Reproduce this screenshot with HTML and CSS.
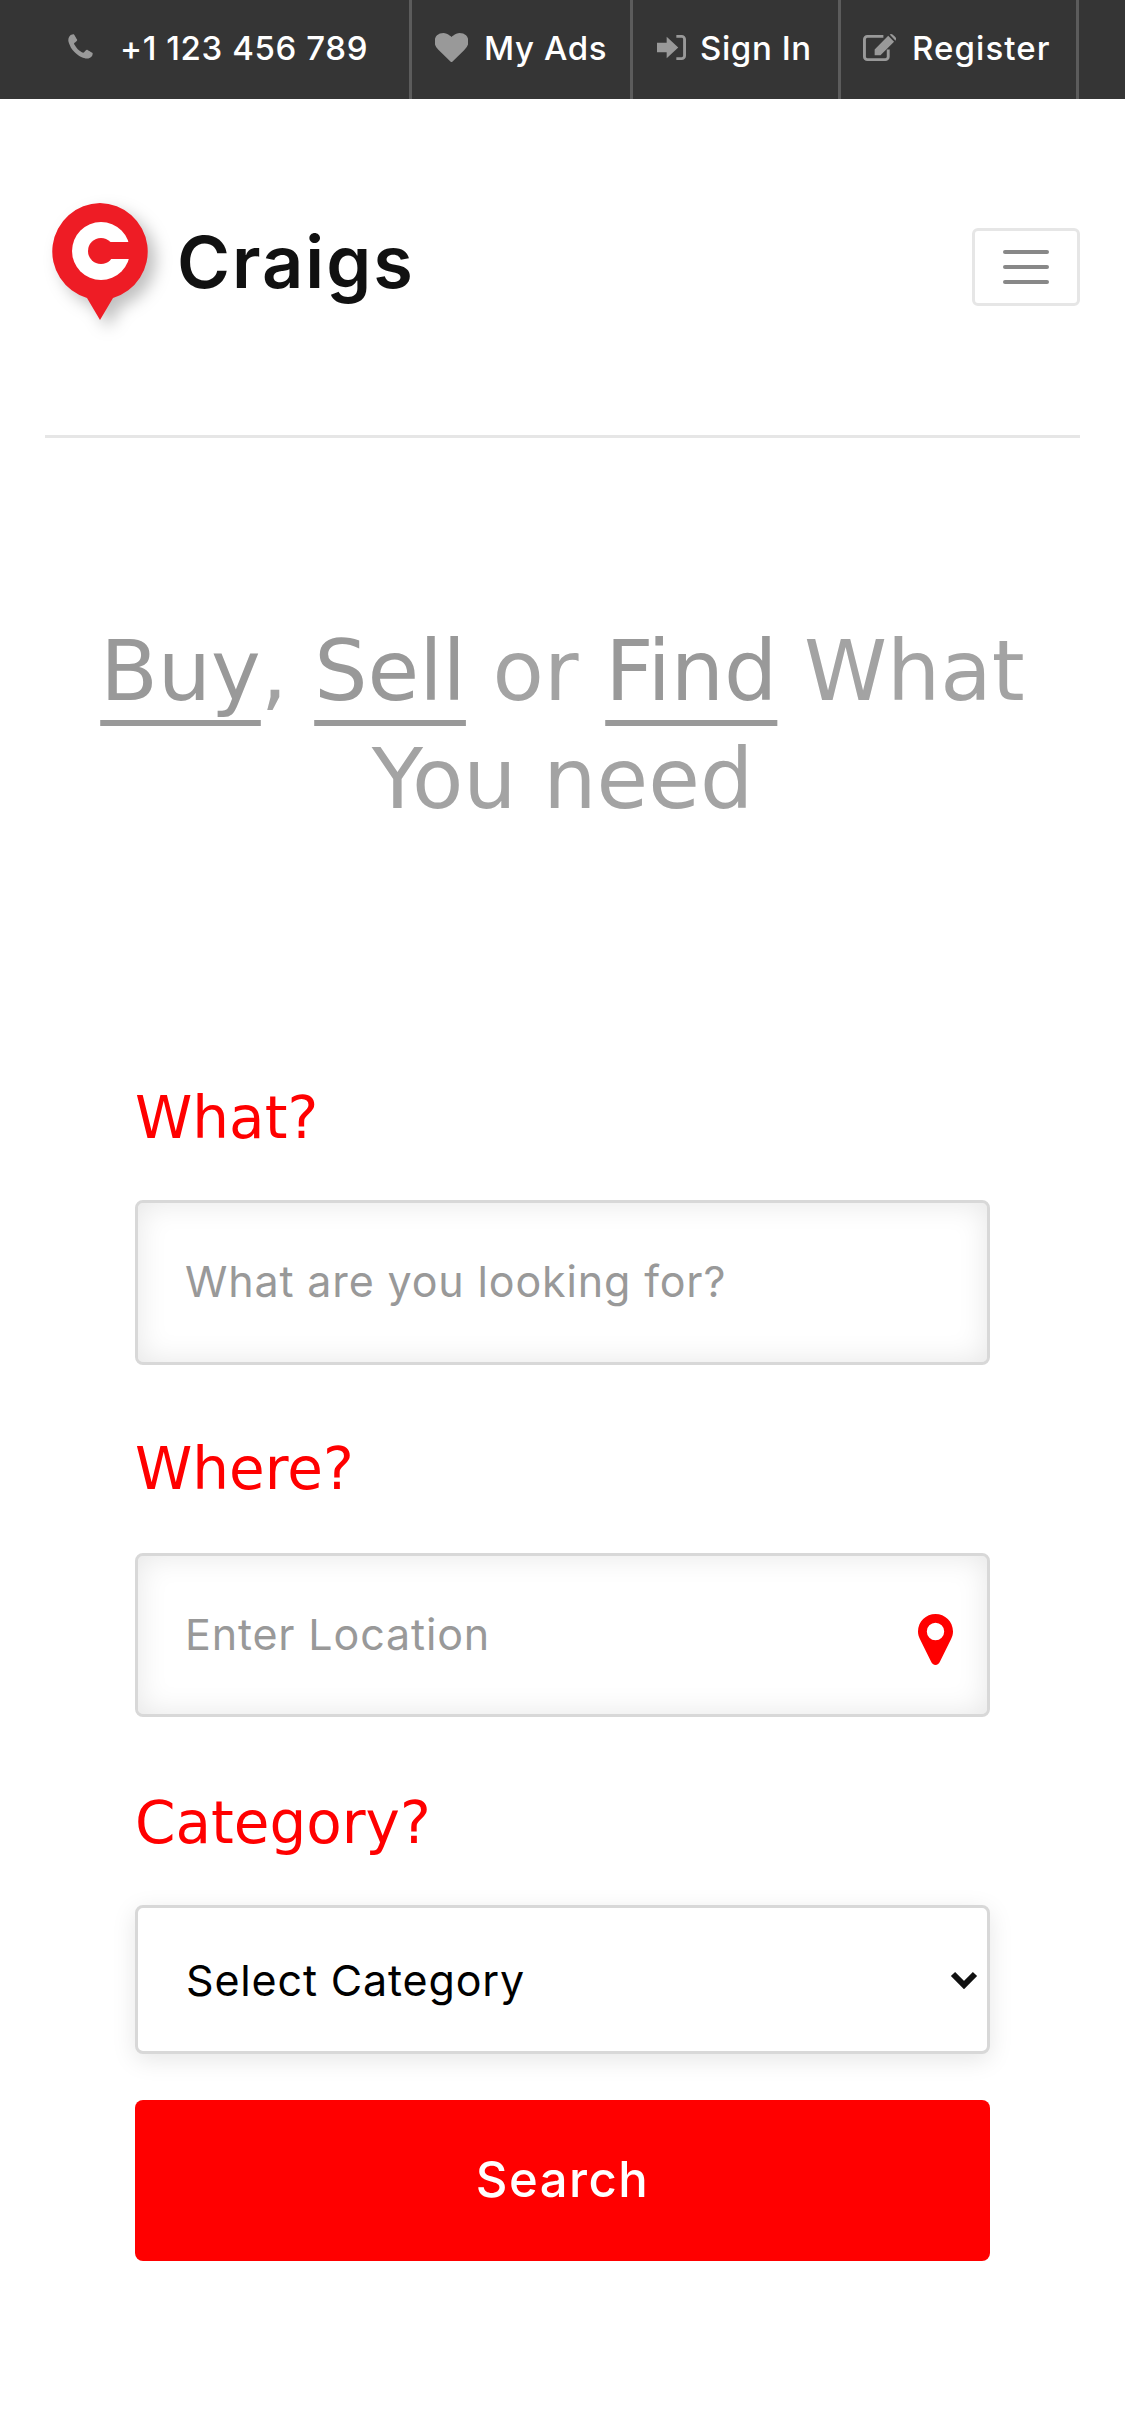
FILE: index.html
```html
<!DOCTYPE html>
<html>
<head>
    <title>Craigs</title>
    <link rel="stylesheet" href="styles.css">
</head>
<body>
    <div class="top-bar">
        <a class="top-link phone-link" href="#">
            <svg class="top-icon phone-icon" viewBox="0 0 1792 1792"><path d="M1600 1240q0 27-10 70.5t-21 68.5q-21 50-122 106-94 51-186 51-27 0-53-3.5t-57.5-12.5-47-14.5-55.5-20.5-49-18q-98-35-175-83-127-79-264-216t-216-264q-48-77-83-175-3-9-18-49t-20.5-55.5-14.5-47-12.5-57.5-3.5-53q0-92 51-186 56-101 106-122 25-11 68.5-21t70.5-10q14 0 21 3 18 6 53 76 11 19 30 54t35 63.5 31 53.5q3 4 17.5 25t21.5 35.5 7 28.5q0 20-28.5 50t-62 55-62 53-28.5 46q0 9 5 22.5t8.5 20.5 14 24 11.5 19q76 137 174 235t235 174q2 1 19 11.5t24 14 20.5 8.5 22.5 5q18 0 46-28.5t53-62 55-62 50-28.5q14 0 28.5 7t35.5 21.5 25 17.5q25 15 53.5 31t63.5 35 54 30q70 35 76 53 3 7 3 21z"/></svg>
            +1 123 456 789
        </a>
        <a class="top-link ads-link" href="#">
            <svg class="top-icon" viewBox="128 128 1536 1536"><path d="M896 1664q-26 0-44-18l-624-602q-10-8-27.5-26t-55.5-65.5-68-97.5-53.5-121-23.5-138q0-220 127-344t351-124q62 0 126.5 21.5t120 58 95.5 68.5 76 68q36-36 76-68t95.5-68.5 120-58 126.5-21.5q224 0 351 124t127 344q0 221-229 450l-623 600q-18 18-44 18z"/></svg>
            My Ads
        </a>
        <a class="top-link signin-link" href="#">
            <svg class="top-icon signin-icon" viewBox="0 0 30 26"><path d="M0 8h10V2l12 11-12 11v-6H0z"/><path class="icon-line" d="M20 1.500h5.500a3 3 0 0 1 3 3v17a3 3 0 0 1-3 3H20"/></svg>
            Sign In
        </a>
        <a class="top-link register-link" href="#">
            <svg class="top-icon" viewBox="0 0 34 28"><path class="icon-line" d="M26 16v7.500a3 3 0 0 1-3 3H4.500a3 3 0 0 1-3-3V5.500a3 3 0 0 1 3-3H21"/><path d="M12 16 26 2l6 6-14 14h-6zM27.500.5 29 0q1 0 3.500 2.500T34 5.500L33.500 7z"/></svg>
            Register
        </a>
    </div>

    <header class="site-header">
        <a class="logo" href="#">
            <svg class="logo-pin" viewBox="0 0 96 117">
                <path class="pin-red" d="M48 0a48.500 48.500 0 0 1 13 95L48 117 35 95A48.500 48.500 0 0 1 48 0z"/>
                <circle class="pin-white" cx="49" cy="48" r="29"/>
                <circle class="pin-red" cx="49" cy="48" r="13"/>
                <rect class="pin-red" x="49" y="39" width="32" height="17"/>
            </svg>
            <span class="logo-text">Craigs</span>
        </a>
        <button class="navbar-toggler" type="button">
            <span></span>
            <span></span>
            <span></span>
        </button>
    </header>

    <section class="hero">
        <h1><a href="#">Buy</a><span>,</span> <a href="#">Sell</a> <span>or</span> <a href="#">Find</a> <span>What</span> <span>You need</span></h1>
    </section>

    <form class="search-form">
        <div class="field">
            <label for="what">What?</label>
            <input type="text" id="what" placeholder="What are you looking for?">
        </div>
        <div class="field field-where">
            <label for="where">Where?</label>
            <div class="input-wrap">
                <input type="text" id="where" placeholder="Enter Location">
                <svg class="pin-icon" viewBox="0 0 35 51"><path fill-rule="evenodd" d="M17.500 0C27 0 35 7.500 35 17.500c0 3-.7 5-2 7.800L22 47.500c-1 2.200-2.500 3.500-4.500 3.500S14 49.700 13 47.500L2 25.300c-1.300-2.800-2-4.800-2-7.800C0 7.500 8 0 17.500 0zm0 8.800a8.700 8.700 0 1 0 0 17.400 8.700 8.700 0 0 0 0-17.400z"/></svg>
            </div>
        </div>
        <div class="field">
            <label for="category">Category?</label>
            <div class="select-wrap">
                <select id="category">
                    <option>Select Category</option>
                    <option>Cars</option>
                    <option>Jobs</option>
                    <option>Property</option>
                </select>
                <svg class="select-arrow" viewBox="0 0 28 18"><path d="M3 3l11 11L25 3"/></svg>
            </div>
        </div>
        <button class="search-button" type="submit">Search</button>
    </form>
</body>
</html>
```

FILE: styles.css
```css
* {
    box-sizing: border-box;
}

body {
    font-family: Inter, "Noto Sans", sans-serif;
    background-color: #fff;
    margin: 0;
    padding: 0;
}

.top-bar {
    display: grid;
    grid-template-columns: 412px 221px 208px 238px;
    height: 99px;
    background-color: #353535;
}

.top-link {
    display: flex;
    align-items: center;
    padding-bottom: 4px;
    border-right: 3px solid #5c5c5c;
    color: #fff;
    font-size: 33px;
    font-weight: 500;
    letter-spacing: 0.6px;
    text-decoration: none;
    white-space: nowrap;
}

.top-icon {
    flex-shrink: 0;
    fill: #999;
    width: 33px;
    height: 29px;
    margin-right: 16px;
}

.icon-line {
    fill: none;
    stroke: #999;
    stroke-width: 3;
}

.phone-link {
    padding-left: 65px;
}

.phone-icon {
    width: 31px;
    height: 31px;
    margin-right: 24px;
}

.ads-link {
    padding-left: 23px;
}

.signin-link {
    padding-left: 24px;
}

.signin-icon {
    width: 29px;
    margin-right: 14px;
}

.register-link {
    padding-left: 22px;
    letter-spacing: 1.1px;
}

.site-header {
    display: flex;
    align-items: center;
    justify-content: space-between;
    height: 339px;
    margin: 0 45px;
    border-bottom: 3px solid #e6e6e6;
}

.logo {
    display: flex;
    align-items: center;
    margin: 0 0 11px 7px;
    color: #111;
    text-decoration: none;
}

.logo-pin {
    width: 96px;
    height: 117px;
    margin-right: 29px;
    filter: drop-shadow(8px 8px 8px rgba(0, 0, 0, 0.25));
}

.pin-red {
    fill: #ee1c25;
}

.pin-white {
    fill: #fff;
}

.logo-text {
    font-size: 72px;
    font-weight: 600;
    letter-spacing: 2px;
}

.navbar-toggler {
    display: flex;
    flex-direction: column;
    align-items: center;
    justify-content: center;
    gap: 11px;
    width: 108px;
    height: 78px;
    padding: 0;
    background: none;
    border: 3px solid #e6e6e6;
    border-radius: 6px;
}

.navbar-toggler span {
    width: 46px;
    height: 4px;
    background-color: #888;
    border-radius: 2px;
}

.hero {
    padding: 179px 45px 0;
}

h1 {
    margin: 0;
    font-family: "DejaVu Sans", sans-serif;
    font-size: 84px;
    font-weight: 400;
    line-height: 108px;
    text-align: center;
    color: #a3a3a3;
}

h1 a {
    color: #999;
    text-decoration: underline;
    text-decoration-thickness: 6px;
    text-underline-offset: 20px;
    text-decoration-skip-ink: none;
}

.search-form {
    padding: 260px 135px 0;
}

.field {
    margin-bottom: 79px;
}

.field label {
    display: block;
    margin-bottom: 57px;
    font-family: "DejaVu Sans", sans-serif;
    font-size: 58px;
    line-height: 50px;
    color: #f00;
}

.field-where {
    margin-bottom: 81px;
}

.field-where label {
    margin-bottom: 59px;
}

.field input,
.field select {
    display: block;
    width: 100%;
    font-family: Inter, "Noto Sans", sans-serif;
    font-size: 43px;
    letter-spacing: 0.85px;
    border: 3px solid #d8d8d8;
    border-radius: 8px;
    outline: none;
}

.field input {
    height: 165px;
    padding: 0 47px 3px;
    box-shadow: inset 0 0 30px rgba(0, 0, 0, 0.1);
}

.field input::placeholder {
    color: #999;
    opacity: 1;
}

.field select {
    height: 149px;
    padding: 0 48px;
    appearance: none;
    background-color: #fff;
    color: #000;
    box-shadow: 0 6px 24px rgba(0, 0, 0, 0.1);
}

.input-wrap {
    position: relative;
}

.input-wrap input {
    height: 164px;
}

.pin-icon {
    position: absolute;
    top: 61px;
    right: 37px;
    width: 35px;
    height: 51px;
    fill: #f00;
}

.select-wrap {
    position: relative;
}

.select-arrow {
    position: absolute;
    top: 66px;
    right: 12px;
    width: 28px;
    height: 18px;
    fill: none;
    stroke: #111;
    stroke-width: 6;
    pointer-events: none;
}

.search-button {
    display: block;
    width: 100%;
    height: 161px;
    margin-top: -33px;
    padding-bottom: 4px;
    background-color: #f00;
    color: #fff;
    border: none;
    border-radius: 8px;
    font-family: Inter, "Noto Sans", sans-serif;
    font-size: 49px;
    font-weight: 500;
    letter-spacing: 1.5px;
    cursor: pointer;
}
```
